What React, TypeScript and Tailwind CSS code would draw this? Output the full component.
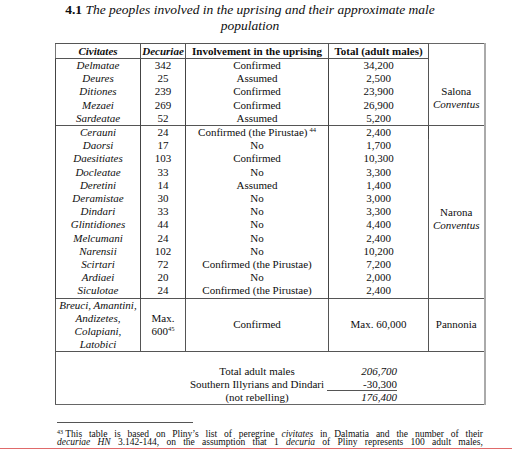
import React from "react";

type Row = { c: string; d: string; i: React.ReactNode; t: string };

const salona: Row[] = [
  { c: "Delmatae", d: "342", i: "Confirmed", t: "34,200" },
  { c: "Deures", d: "25", i: "Assumed", t: "2,500" },
  { c: "Ditiones", d: "239", i: "Confirmed", t: "23,900" },
  { c: "Mezaei", d: "269", i: "Confirmed", t: "26,900" },
  { c: "Sardeatae", d: "52", i: "Assumed", t: "5,200" },
];

const narona: Row[] = [
  {
    c: "Cerauni",
    d: "24",
    i: (
      <>
        Confirmed (the Pirustae)
        <sup className="text-[6.5px] top-[-4px] ml-[2px]">44</sup>
      </>
    ),
    t: "2,400",
  },
  { c: "Daorsi", d: "17", i: "No", t: "1,700" },
  { c: "Daesitiates", d: "103", i: "Confirmed", t: "10,300" },
  { c: "Docleatae", d: "33", i: "No", t: "3,300" },
  { c: "Deretini", d: "14", i: "Assumed", t: "1,400" },
  { c: "Deramistae", d: "30", i: "No", t: "3,000" },
  { c: "Dindari", d: "33", i: "No", t: "3,300" },
  { c: "Glintidiones", d: "44", i: "No", t: "4,400" },
  { c: "Melcumani", d: "24", i: "No", t: "2,400" },
  { c: "Narensii", d: "102", i: "No", t: "10,200" },
  { c: "Scirtari", d: "72", i: "Confirmed (the Pirustae)", t: "7,200" },
  { c: "Ardiaei", d: "20", i: "No", t: "2,000" },
  { c: "Siculotae", d: "24", i: "Confirmed (the Pirustae)", t: "2,400" },
];

const cell = "p-0 text-center border-x border-[#444] leading-[13.2px] h-[13.2px] whitespace-nowrap";
const pcell = "p-0 h-[53px] text-center leading-[13.2px] border border-[#555] whitespace-nowrap";
const hcell = "p-0 h-[14px] leading-[14px] font-bold border border-[#555] whitespace-nowrap";

function DataRow({ r, first, conv }: { r: Row; first?: boolean; conv?: React.ReactNode }) {
  const top = first ? " border-t border-t-[#555]" : "";
  return (
    <tr>
      <td className={cell + " italic" + top}>{r.c}</td>
      <td className={cell + top}>{r.d}</td>
      <td className={cell + top}>{r.i}</td>
      <td className={cell + top}>{r.t}</td>
      {conv}
    </tr>
  );
}

export default function App() {
  return (
    <div className="w-[512px] h-[450px] bg-white text-[#0e0e0e] [font-family:'Liberation_Serif','Times_New_Roman',serif] overflow-hidden">
      <div className="w-[500px] text-center text-[13.5px] leading-[16.7px] pt-[1.5px]">
        <span className="font-bold">4.1</span>{" "}
        <span className="italic">The peoples involved in the uprising and their approximate male</span>
        <br />
        <span className="italic">population</span>
      </div>

      <table className="table-fixed border-collapse ml-[55px] mt-[8px] w-[429px] text-[11px] border-t border-[#666]">
        <colgroup>
          <col className="w-[85px]" />
          <col className="w-[45px]" />
          <col className="w-[143px]" />
          <col className="w-[100px]" />
          <col className="w-[56px]" />
        </colgroup>
        <tbody>
          <tr>
            <th className={hcell + " italic border-l-[#777]"}>Civitates</th>
            <th className={hcell + " italic"}>Decuriae</th>
            <th className={hcell}>Involvement in the uprising</th>
            <th className={hcell}>Total (adult males)</th>
            <td
              rowSpan={6}
              className="p-0 align-top text-center leading-[13.2px] border-l border-[#555] border-r-2 border-r-[#aaa]"
            >
              <div className="pt-[41px]">
                Salona
                <br />
                <span className="italic">Conventus</span>
              </div>
            </td>
          </tr>
          {salona.map((r) => (
            <DataRow key={r.c} r={r} />
          ))}
          {narona.map((r, idx) => (
            <DataRow
              key={r.c}
              r={r}
              first={idx === 0}
              conv={
                idx === 0 ? (
                  <td
                    rowSpan={13}
                    className="p-0 align-top text-center leading-[13.2px] border-t border-[#555] border-l border-r-2 border-r-[#aaa]"
                  >
                    <div className="pt-[80px]">
                      Narona
                      <br />
                      <span className="italic">Conventus</span>
                    </div>
                  </td>
                ) : undefined
              }
            />
          ))}
          <tr>
            <td className={pcell + " italic"}>
              Breuci, Amantini,
              <br />
              Andizetes,
              <br />
              Colapiani,
              <br />
              Latobici
            </td>
            <td className={pcell}>
              Max.
              <br />
              600<sup className="text-[6.5px] top-[-4px]">45</sup>
            </td>
            <td className={pcell}>Confirmed</td>
            <td className={pcell}>Max. 60,000</td>
            <td className={pcell + " border-r-2 border-r-[#aaa]"}>Pannonia</td>
          </tr>
          <tr>
            <td colSpan={5} className="p-0 border border-[#555] border-r-2 border-r-[#aaa] border-b-[#666]">
              <div className="ml-[131px] pt-[12.5px] grid grid-cols-[140px_70px] leading-[13.2px]">
                <div className="text-center">Total adult males</div>
                <div className="text-right italic">206,700</div>
                <div className="text-center whitespace-nowrap">Southern Illyrians and Dindari</div>
                <div className="text-right border-b border-[#555] leading-[12.2px]">-30,300</div>
                <div className="text-center">(not rebelling)</div>
                <div className="text-right italic">176,400</div>
              </div>
            </td>
          </tr>
        </tbody>
      </table>

      <div className="ml-[57px] mt-[17px] w-[136px] h-px bg-[#555]" />
      <div className="ml-[57px] w-[426px] text-[9.5px] leading-[8.5px] mt-[6.5px]">
        <div className="whitespace-nowrap flex justify-between">
          <span>
            <sup className="text-[6px] top-[-3px]">43</sup> This
          </span>
          <span>table</span>
          <span>is</span>
          <span>based</span>
          <span>on</span>
          <span>Pliny’s</span>
          <span>list</span>
          <span>of</span>
          <span>peregrine</span>
          <span className="italic">civitates</span>
          <span>in</span>
          <span>Dalmatia</span>
          <span>and</span>
          <span>the</span>
          <span>number</span>
          <span>of</span>
          <span>their</span>
        </div>
        <div className="flex justify-between whitespace-nowrap">
          <span className="italic">decuriae</span>
          <span className="italic">HN</span>
          <span>3.142-144,</span>
          <span>on</span>
          <span>the</span>
          <span>assumption</span>
          <span>that</span>
          <span>1</span>
          <span className="italic">decuria</span>
          <span>of</span>
          <span>Pliny</span>
          <span>represents</span>
          <span>100</span>
          <span>adult</span>
          <span>males,</span>
        </div>
      </div>
      <div className="mt-[1px] w-[512px] h-px bg-[#e06a6a]" />
    </div>
  );
}
